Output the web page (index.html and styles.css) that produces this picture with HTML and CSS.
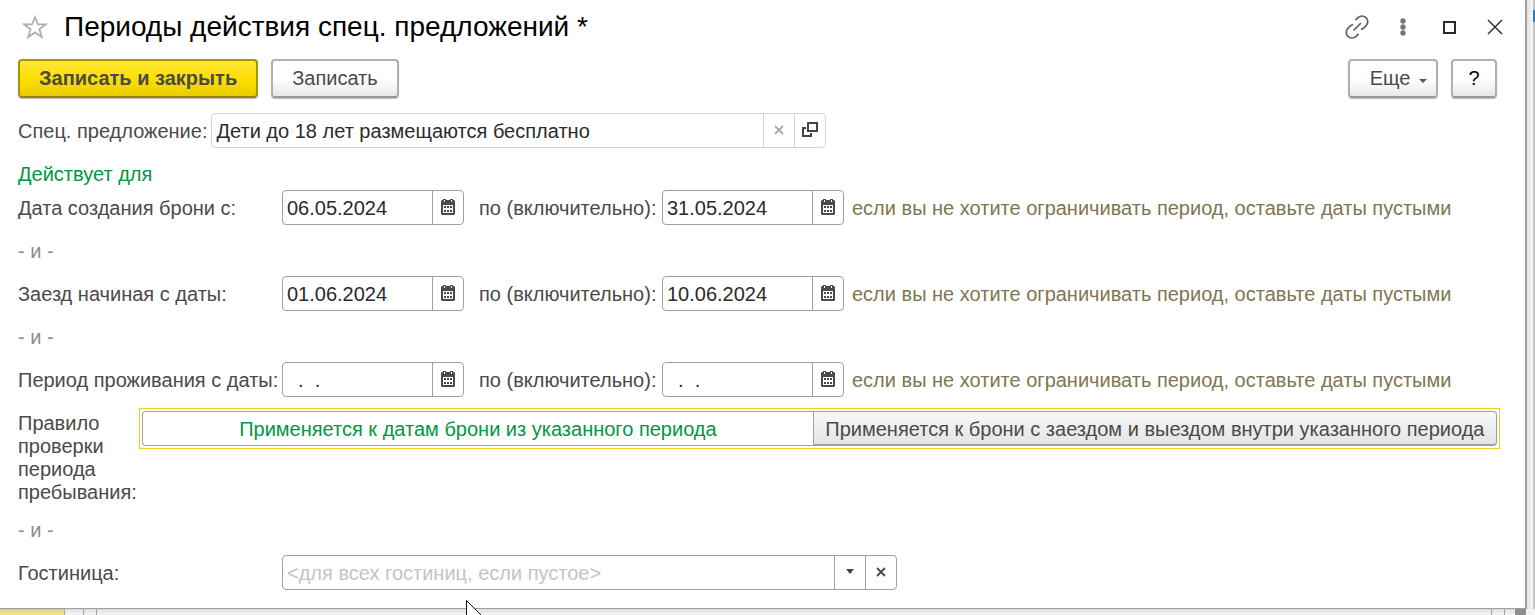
FILE: index.html
```html
<!DOCTYPE html>
<html lang="ru">
<head>
<meta charset="utf-8">
<title>Периоды действия спец. предложений</title>
<link rel="stylesheet" href="styles.css">
</head>
<body>
<svg class="sprite" aria-hidden="true">
  <symbol id="calendar" viewBox="0 0 14 16">
    <path fill="#4a4a4a" fill-rule="evenodd" d="M0 2l1-1h1V0h3v1h4V0h3v1h1l1 1v13l-1 1H1l-1-1zM2 6v8h10V6zM3 7h2v2H3zM6 7h2v2H6zM9 7h2v2H9zM3 11h2v2H3zM6 11h2v2H6zM9 11h2v2H9z"/>
    <path fill="#fff" d="M3 1h1v2H3zM10 1h1v2h-1z"/>
  </symbol>
  <symbol id="cross" viewBox="0 0 10 10">
    <path fill="none" stroke="currentColor" stroke-width="1.8" d="M1 1l8 8M9 1L1 9"/>
  </symbol>
</svg>
<div class="desktop">
  <main class="dialog">
    <header class="titlebar">
      <button class="icon-button" type="button" aria-label="В избранное">
        <svg width="26" height="24" viewBox="0 0 26 24"><path fill="none" stroke="#abb1b8" stroke-width="1.8" d="M13 2l2.8 7.3 8 .1-6.4 4.8 2.4 7.8L13 17.400l-6.800 4.600 2.400-7.800L2.200 9.400l8-.1z"/></svg>
      </button>
      <h1 class="title">Периоды действия спец. предложений *</h1>
      <div class="window-tools">
        <button class="icon-button" type="button" aria-label="Получить ссылку">
          <svg width="24" height="24" viewBox="0 0 24 24"><g fill="none" stroke="#606060" stroke-width="1.7"><path d="M10.500 5l2.500-2.300c2.300-2.100 5.800-2.200 8-.1 2.300 2.200 2.300 5.700.1 8l-2.600 2.700-2.500 1.200"/><path d="M13.500 19l-2.500 2.300c-2.300 2.100-5.800 2.200-8 .1-2.300-2.200-2.300-5.700-.1-8l2.600-2.700L8 9.500"/><path d="M8.500 15.500l7.500-7.500"/></g></svg>
        </button>
        <button class="icon-button" type="button" aria-label="Меню">
          <svg width="6" height="18" viewBox="0 0 6 18"><g fill="#757575"><circle cx="3" cy="3" r="2.700"/><circle cx="3" cy="9" r="2.700"/><circle cx="3" cy="15" r="2.700"/></g></svg>
        </button>
        <button class="icon-button" type="button" aria-label="Развернуть">
          <svg width="13" height="13" viewBox="0 0 13 13"><path fill="none" stroke="#2b2b2b" stroke-width="2" d="M1 1h11v11H1z"/></svg>
        </button>
        <button class="icon-button" type="button" aria-label="Закрыть">
          <svg width="16" height="16" viewBox="0 0 16 16"><path fill="none" stroke="#333" stroke-width="1.500" d="M1 1l14 14M15 1L1 15"/></svg>
        </button>
      </div>
    </header>

    <div class="commands">
      <button class="button button-primary" type="button">Записать и закрыть</button>
      <button class="button" type="button">Записать</button>
      <span class="spacer"></span>
      <button class="button button-more" type="button">Еще <svg width="8" height="4" viewBox="0 0 8 4"><path fill="#555" d="M0 0h8L4 4z"/></svg></button>
      <button class="button button-help" type="button" aria-label="Справка">?</button>
    </div>

    <form class="form">
      <div class="offer">
        <label for="offer">Спец. предложение:</label>
        <div class="field field-wide field-light">
          <input class="input" id="offer" type="text" value="Дети до 18 лет размещаются бесплатно">
          <button class="addon" type="button" aria-label="Очистить"><svg class="muted" width="10" height="10"><use href="#cross"/></svg></button>
          <button class="addon" type="button" aria-label="Открыть"><svg width="16" height="16" viewBox="0 0 16 16"><path fill="none" stroke="#444" stroke-width="2" d="M6 1h9v8H6zM4 6H1v8h8v-3"/></svg></button>
        </div>
      </div>

      <h2 class="section">Действует для</h2>

      <div class="row">
        <label for="created-from">Дата создания брони с:</label>
        <div class="field"><input class="input" id="created-from" type="text" value="06.05.2024"><button class="addon" type="button" aria-label="Календарь"><svg width="14" height="16"><use href="#calendar"/></svg></button></div>
        <label class="until" for="created-to">по (включительно):</label>
        <div class="field"><input class="input" id="created-to" type="text" value="31.05.2024"><button class="addon" type="button" aria-label="Календарь"><svg width="14" height="16"><use href="#calendar"/></svg></button></div>
        <span class="hint">если вы не хотите ограничивать период, оставьте даты пустыми</span>
      </div>
      <p class="and">- и -</p>
      <div class="row">
        <label for="arrival-from">Заезд начиная с даты:</label>
        <div class="field"><input class="input" id="arrival-from" type="text" value="01.06.2024"><button class="addon" type="button" aria-label="Календарь"><svg width="14" height="16"><use href="#calendar"/></svg></button></div>
        <label class="until" for="arrival-to">по (включительно):</label>
        <div class="field"><input class="input" id="arrival-to" type="text" value="10.06.2024"><button class="addon" type="button" aria-label="Календарь"><svg width="14" height="16"><use href="#calendar"/></svg></button></div>
        <span class="hint">если вы не хотите ограничивать период, оставьте даты пустыми</span>
      </div>
      <p class="and">- и -</p>
      <div class="row">
        <label for="stay-from">Период проживания с даты:</label>
        <div class="field"><input class="input" id="stay-from" type="text" value="  .  ."><button class="addon" type="button" aria-label="Календарь"><svg width="14" height="16"><use href="#calendar"/></svg></button></div>
        <label class="until" for="stay-to">по (включительно):</label>
        <div class="field"><input class="input" id="stay-to" type="text" value="  .  ."><button class="addon" type="button" aria-label="Календарь"><svg width="14" height="16"><use href="#calendar"/></svg></button></div>
        <span class="hint">если вы не хотите ограничивать период, оставьте даты пустыми</span>
      </div>

      <div class="rule" role="radiogroup" aria-labelledby="rule-label">
        <span class="rule-label" id="rule-label">Правило проверки периода пребывания:</span>
        <div class="switch">
          <label class="option"><input class="radio" type="radio" name="rule" checked><span class="option-text">Применяется к датам брони из указанного периода</span></label>
          <label class="option"><input class="radio" type="radio" name="rule"><span class="option-text">Применяется к брони с заездом и выездом внутри указанного периода</span></label>
        </div>
      </div>
      <p class="and">- и -</p>
      <div class="row">
        <label for="hotel">Гостиница:</label>
        <div class="field field-wide">
          <input class="input" id="hotel" type="text" placeholder="&lt;для всех гостиниц, если пустое&gt;">
          <button class="addon" type="button" aria-label="Выбрать"><svg width="8" height="5" viewBox="0 0 8 5"><path fill="#444" d="M0 0h8L4 5z"/></svg></button>
          <button class="addon" type="button" aria-label="Очистить"><svg width="10" height="10"><use href="#cross"/></svg></button>
        </div>
      </div>
    </form>
  </main>
  <div class="side"><span class="side-mark"></span></div>
  <div class="below"><span class="below-menu"></span><span class="below-gap"></span><span class="below-gutter"></span><span class="below-page"></span><span class="below-gutter"></span><span class="below-gap-end"></span><span class="below-scroll"></span></div>
  <svg class="pointer" width="22" height="32" viewBox="0 0 22 32"><path fill="#fff" stroke="#111" d="M.5.5v25l6-5.500 4 9 4-2-4-8.500h8z"/></svg>
</div>
</body>
</html>
```
FILE: styles.css
```css
* { box-sizing: border-box; }

body {
  margin: 0;
  font: 20px/23px "Liberation Sans", Arial, sans-serif;
  color: #4a4a4a;
  background: #f3f3f3;
}

button, input { font: inherit; color: inherit; }

.sprite { display: none; }

.desktop {
  position: relative;
  display: grid;
  grid-template-columns: 1fr 8px;
  grid-template-rows: auto 1fr;
  height: 100vh;
  overflow: hidden;
}

.dialog {
  padding: 6px 28px 18px 18px;
  background: #fff;
  border-right: 2px solid #a0a0a0;
  border-bottom: 1px solid #a0a0a0;
}

.titlebar { display: flex; align-items: center; height: 42px; }

.title {
  flex: 1;
  margin: 0 0 0 16px;
  font-size: 28px;
  line-height: 32px;
  font-weight: normal;
  color: #000;
}

.icon-button {
  display: flex;
  padding: 0;
  background: none;
  border: 0;
}

.titlebar > .icon-button { margin-left: 4px; }

.window-tools { display: flex; align-items: center; margin-right: -21px; }
.window-tools .icon-button { justify-content: center; width: 46px; }

.commands { display: flex; gap: 13px; margin-top: 11px; }
.spacer { flex: 1; }

.button {
  height: 39px;
  padding: 0 19px;
  background: linear-gradient(#fff 50%, #e8e8e8);
  border: 2px solid #b0b0b0;
  border-bottom-color: #979797;
  border-radius: 4px;
  box-shadow: 0 1px 1px #bbb;
}

.button-primary {
  font-weight: bold;
  background: linear-gradient(#ffe83c, #ffdf00 50%, #e8ce00);
  border-color: #a99500;
  border-bottom-color: #968400;
}

.button-more { padding: 0 9px 0 20px; }
.button-more svg { margin-left: 3px; vertical-align: 2px; }
.button-help { width: 46px; padding: 0; color: #000; }

.offer { display: flex; align-items: center; gap: 4px; margin-top: 15px; }
.offer label { padding-top: 2px; }

.field {
  display: flex;
  width: 182px;
  height: 35px;
  background: #fff;
  border: 1px solid #a0a0a0;
  border-radius: 4px;
}

.field-wide { width: 615px; }
.field-light { border-color: #d4d4d4; }

.input {
  flex: 1;
  min-width: 0;
  padding: 2px 4px 0;
  color: #2b2b2b;
  background: none;
  border: 0;
  outline: 0;
}

.input::placeholder { color: #c4c4c4; opacity: 1; }

.addon {
  display: flex;
  align-items: center;
  justify-content: center;
  width: 31px;
  padding: 0 0 2px;
  background: none;
  border: 0;
  border-left: 1px solid #a0a0a0;
}

.field-light .addon { border-color: #d4d4d4; }
.muted { color: #aaa; }

.section {
  margin: 15px 0 4px;
  font-size: 20px;
  font-weight: normal;
  color: #009646;
}

.row {
  display: grid;
  grid-template-columns: 264px 182px 198px 182px 1fr;
  align-items: center;
}

.row label, .row .hint { padding-top: 2px; white-space: nowrap; }
.row .field-wide { grid-column: 2 / -1; }
.row .until { padding-left: 15px; }
.row .hint { padding-left: 8px; color: #80764f; }

.and { margin: 15px 0 13px; color: #8c8c8c; }

.rule { display: flex; align-items: flex-start; gap: 7px; margin-top: 11px; }
.rule-label { width: 114px; padding-top: 4px; }

.switch {
  display: flex;
  flex: 1;
  height: 41px;
  margin-right: -3px;
  padding: 2px;
  border: 1px solid #f8cc28;
}

.option { position: relative; display: flex; flex: 1 1 50%; }
.option:last-child { flex-basis: 51%; }
.radio { position: absolute; margin: 0; opacity: 0; }

.option-text {
  flex: 1;
  padding: 6px 0;
  text-align: center;
  white-space: nowrap;
  background: linear-gradient(#f8f8f8, #e4e4e4);
  border: 1px solid #a0a0a0;
  border-bottom-width: 2px;
  border-radius: 0 4px 4px 0;
}

.radio:checked + .option-text {
  color: #009646;
  background: #fff;
  border-right: 0;
  border-bottom-width: 1px;
  border-radius: 4px 0 0 4px;
}

.side {
  background: linear-gradient(90deg, #e2e2e2, #f5f5f5 5px);
  border-right: 2px solid #c4c4c4;
}

.side-mark {
  display: block;
  width: 2px;
  height: 12px;
  margin: 10px -2px 0 auto;
  background: #3478ac;
}

.below {
  grid-column: 1 / -1;
  display: flex;
  background: linear-gradient(#dedede, #f6f6f6);
}

.below-menu { width: 65px; background: linear-gradient(#e0d286, #f5e593); border-right: 1px solid #aaa; }
.below-gap { width: 18px; }
.below-gutter { width: 14px; border-left: 1px solid #a0a0a0; border-right: 1px solid #a0a0a0; }
.below-page { flex: 1; }
.below-gap-end { width: 10px; }
.below-scroll { width: 20px; background: linear-gradient(90deg, #8f8f8f 11px, #f3f3f3 11px); }

.pointer { position: absolute; left: 466px; top: 600px; }
```
